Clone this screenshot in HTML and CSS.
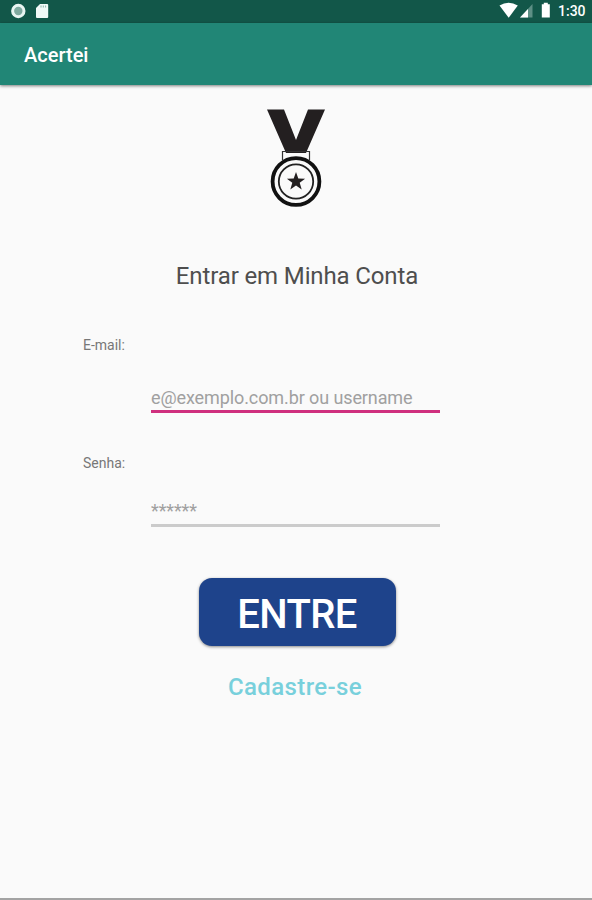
FILE: index.html
```html
<!DOCTYPE html>
<html lang="pt-BR">
<head>
    <meta charset="UTF-8">
    <meta name="viewport" content="width=device-width, initial-scale=1.0">
    <title>Acertei</title>
    <link rel="stylesheet" href="styles.css">
</head>
<body>
    <div class="status-bar">
        <svg class="status-left" width="60" height="23" viewBox="0 0 60 23">
            <circle cx="18.3" cy="11" r="5.7" fill="#7fa99f" stroke="#e9f5f2" stroke-width="3"/>
            <path d="M40 4h7.2q1 0 1 1v12q0 1-1 1H37q-1 0-1-1V8z" fill="#f1faf8"/>
            <path d="M41 5.5v2M43.3 5.5v2M45.6 5.5v2" stroke="#8db3aa" stroke-width="1"/>
        </svg>
        <div class="status-right">
            <svg width="54" height="23" viewBox="0 0 54 23">
                <path d="M.5 5.6Q9.5-.2 18.8 5.6L9.7 17.8z" fill="#fff"/>
                <path d="M21 17.5L33.5 4v13.5z" fill="#5d8f85"/>
                <path d="M21 17.5L29 9v8.5z" fill="#fff"/>
                <path d="M42.8 4.3h2V2.8h4v1.5h2v13.2h-8z" fill="#fff"/>
            </svg>
            <span class="clock">1:30</span>
        </div>
    </div>
    <header class="app-bar">
        <h1>Acertei</h1>
    </header>

    <main class="content">
        <svg class="medal" width="58" height="99" viewBox="0 0 58 99">
            <path d="M0 0.5H17L29 31 41 .5H58L39 44H19z" fill="#231f20"/>
            <path d="M15.5 51v-8.5h27V51" fill="none" stroke="#333" stroke-width="1.2"/>
            <circle cx="29" cy="72.5" r="23.4" fill="#fafafa" stroke="#111" stroke-width="3.8"/>
            <circle cx="29" cy="72.5" r="17.2" fill="none" stroke="#222" stroke-width="1.8"/>
            <path d="M29 63l2.3 6.5 6.8.2-5.4 4.1 2 6.6L29 76.5l-5.7 3.9 2-6.6-5.4-4.1 6.8-.2z" fill="#231f20"/>
        </svg>
        <h2>Entrar em Minha Conta</h2>

        <form class="login-form" id="loginForm">
            <label for="email">E-mail:</label>
            <input class="email" type="text" id="email" placeholder="e@exemplo.com.br ou username">
            <label for="senha">Senha:</label>
            <input class="senha" type="password" id="senha" placeholder="******">
            <button type="submit" class="form-submit">ENTRE</button>
        </form>
        <a href="#" class="register-link">Cadastre-se</a>
    </main>
</body>
</html>
```

FILE: styles.css
```css
* {
    box-sizing: border-box;
}
body, html {
    margin: 0;
    padding: 0;
    height: 100%;
    font-family: Roboto, 'Liberation Sans', sans-serif;
    background-color: #fafafa;
}
body {
    display: flex;
    flex-direction: column;
    overflow: hidden;
    border-bottom: 2px solid #a3a3a3;
}
.status-bar {
    display: flex;
    justify-content: space-between;
    flex: none;
    height: 23px;
    padding-right: 2px;
    background-color: #125749;
}
.status-right {
    display: flex;
}
.clock {
    width: 32px;
    margin-left: 5px;
    color: #fff;
    font-size: 14px;
    font-weight: 500;
    line-height: 23px;
    white-space: nowrap;
}
.app-bar {
    flex: none;
    height: 62px;
    padding-left: 24px;
    background-color: #218676;
    box-shadow: 0 1px 3px rgba(0,0,0,0.5);
}
.app-bar h1 {
    margin: 0;
    color: #fff;
    font-size: 20px;
    font-weight: 500;
    line-height: 64px;
}
.content {
    display: flex;
    flex-direction: column;
    align-items: center;
    padding-top: 24px;
}
.medal {
    display: block;
}
h2 {
    margin: 54px 0 0 2px;
    color: #4e4e4e;
    font-size: 24px;
    font-weight: 400;
    line-height: 28px;
    letter-spacing: -0.13px;
}
.login-form {
    display: flex;
    flex-direction: column;
    width: 426px;
    margin-top: 47px;
}
.login-form label {
    color: #777;
    font-size: 14px;
    line-height: 16px;
}
.login-form input {
    width: 289px;
    height: 30px;
    margin-left: 68px;
    padding: 0 0 2px;
    border: none;
    border-bottom: 3px solid #cbcbcb;
    outline: none;
    background: none;
    color: #444;
    font-family: inherit;
    font-size: 18px;
    letter-spacing: -0.1px;
}
.login-form input::placeholder {
    color: #a0a0a0;
    opacity: 1;
}
.login-form .email {
    margin-top: 30px;
    margin-bottom: 42px;
    padding: 2px 0 0;
    border-bottom-color: #cf307e;
}
.login-form .senha {
    margin-top: 26px;
    padding-bottom: 0;
}
.form-submit {
    align-self: center;
    width: 197px;
    height: 68px;
    margin: 51px 0 0 2px;
    padding: 4px 0 0;
    border: none;
    border-radius: 13px;
    background-color: #1e438b;
    box-shadow: 0 1px 3px rgba(0,0,0,0.45);
    color: #fff;
    font-family: inherit;
    font-size: 40px;
    font-weight: 500;
    letter-spacing: -0.6px;
    cursor: pointer;
}
.register-link {
    margin-top: 27px;
    margin-right: 2px;
    color: #78d0dc;
    font-size: 24px;
    font-weight: 500;
    line-height: 28px;
    letter-spacing: 0.38px;
    text-decoration: none;
}
```
